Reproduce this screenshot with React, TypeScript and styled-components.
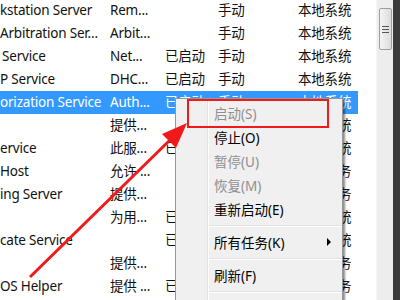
import { FC } from 'react'
import styled, { createGlobalStyle, css } from 'styled-components'

const GlobalStyle = createGlobalStyle`
  html, body {
    margin: 0;
    padding: 0;
    background: #ffffff;
    overflow: hidden;
  }
  body {
    font-family: 'Noto Sans', 'Noto Sans CJK SC', sans-serif;
  }
`

const Screen = styled.div`
  position: relative;
  width: 400px;
  height: 300px;
  display: flex;
  flex-direction: row;
  overflow: hidden;
  font-size: 13.5px;
  color: #111111;
`

const ListPane = styled.div`
  flex: 0 0 376px;
  background: #ffffff;
  overflow: hidden;
  display: flex;
  flex-direction: column;
  margin-top: -1px;
`

const Row = styled.div<{ selected?: boolean }>`
  ${({ selected }) => css`
    flex: 0 0 23px;
    width: 358px;
    display: grid;
    grid-template-columns: 110px 55px 53px 80px 60px;
    align-items: center;
    white-space: nowrap;
    background: ${selected ? '#3399ff' : 'transparent'};
    color: ${selected ? '#ffffff' : '#111111'};
  `}
`

const Cell = styled.div<{ indent?: number }>`
  ${({ indent }) => css`
    overflow: hidden;
    padding-left: ${indent ?? 0}px;
    line-height: 23px;
    letter-spacing: -0.2px;
  `}
`

const ScrollTrack = styled.div`
  flex: 0 0 17px;
  background: #ededed;
  border-left: 1px solid #f6f6f6;
  padding: 8px 1px 0 2px;
  box-sizing: border-box;
`

const Thumb = styled.div`
  height: 42px;
  border: 1px solid #9e9e9e;
  border-radius: 2px;
  background: linear-gradient(to right, #f4f4f4, #dcdcdc);
  display: flex;
  flex-direction: column;
  align-items: center;
  justify-content: center;
  gap: 2px;
  box-sizing: border-box;
`

const Grip = styled.div`
  width: 7px;
  height: 1px;
  background: #555;
`

const DarkEdge = styled.div`
  flex: 1;
  background: #3b3b3b;
`

const Menu = styled.div`
  position: absolute;
  left: 175px;
  top: 98px;
  width: 168px;
  height: 230px;
  box-sizing: border-box;
  border: 1px solid #979797;
  padding-top: 2px;
  background: linear-gradient(
    to right,
    #f0f0f0 31px,
    #e2e3e3 31px,
    #e2e3e3 32px,
    #ffffff 32px,
    #ffffff 33px,
    #f0f0f0 33px
  );
  box-shadow: 2px 2px 2px rgba(0, 0, 0, 0.45);
  display: flex;
  flex-direction: column;
`

const MenuItem = styled.div<{ disabled?: boolean }>`
  ${({ disabled }) => css`
    height: 24px;
    display: flex;
    align-items: center;
    justify-content: space-between;
    padding: 0 11px 0 38px;
    color: ${disabled ? '#8f8f8f' : '#000000'};
    white-space: nowrap;
  `}
`

const SubArrow = styled.span`
  width: 0;
  height: 0;
  border-left: 4px solid #000;
  border-top: 4px solid transparent;
  border-bottom: 4px solid transparent;
`

const Separator = styled.div`
  height: 9px;
  display: flex;
  align-items: center;
  padding-left: 33px;
  &::after {
    content: '';
    flex: 1;
    height: 1px;
    background: #e0e0e0;
    border-bottom: 1px solid #ffffff;
  }
`

const RedBox = styled.div`
  position: absolute;
  left: 187px;
  top: 99px;
  width: 142px;
  height: 29px;
  box-sizing: border-box;
  border: 2px solid #f01a1a;
`

const Overlay = styled.svg`
  position: absolute;
  left: 0;
  top: 0;
  pointer-events: none;
`

type Service = {
  name: string
  indent?: number
  desc: string
  status: string
  start: string
  logon: string
}

const services: Service[] = [
  { name: 'kstation Server', desc: 'Rem...', status: '', start: '手动', logon: '本地系统' },
  { name: 'Arbitration Ser...', desc: 'Arbit...', status: '', start: '手动', logon: '本地系统' },
  { name: 'Service', indent: 2, desc: 'Net...', status: '已启动', start: '手动', logon: '本地系统' },
  { name: 'P Service', desc: 'DHC...', status: '已启动', start: '手动', logon: '本地系统' },
  { name: 'orization Service', desc: 'Auth...', status: '已启动', start: '手动', logon: '本地系统' },
  { name: '', desc: '提供...', status: '', start: '手动', logon: '本地系统' },
  { name: 'ervice', desc: '此服...', status: '已启动', start: '手动', logon: '本地系统' },
  { name: 'Host', desc: '允许 ...', status: '', start: '手动', logon: '网络服务' },
  { name: 'ing Server', desc: '提供...', status: '', start: '手动', logon: '本地服务' },
  { name: '', desc: '为用...', status: '已启动', start: '自动', logon: '本地系统' },
  { name: 'cate Service', desc: '', status: '已启动', start: '手动', logon: '本地系统' },
  { name: '', desc: '提供...', status: '', start: '手动', logon: '本地服务' },
  { name: 'OS Helper', desc: '提供 ...', status: '已启动', start: '自动', logon: '网络服务' },
]

const App: FC = () => {
  return (
    <>
      <GlobalStyle />
      <Screen>
        <ListPane>
          {services.map((s, i) => (
            <Row key={i} selected={i === 4}>
              <Cell indent={s.indent}>{s.name}</Cell>
              <Cell>{s.desc}</Cell>
              <Cell>{s.status}</Cell>
              <Cell>{s.start}</Cell>
              <Cell>{s.logon}</Cell>
            </Row>
          ))}
        </ListPane>
        <ScrollTrack>
          <Thumb>
            <Grip />
            <Grip />
            <Grip />
          </Thumb>
        </ScrollTrack>
        <DarkEdge />

        <Menu>
          <MenuItem disabled>启动(S)</MenuItem>
          <MenuItem>停止(O)</MenuItem>
          <MenuItem disabled>暂停(U)</MenuItem>
          <MenuItem disabled>恢复(M)</MenuItem>
          <MenuItem>重新启动(E)</MenuItem>
          <Separator />
          <MenuItem>
            所有任务(K)
            <SubArrow />
          </MenuItem>
          <Separator />
          <MenuItem>刷新(F)</MenuItem>
          <Separator />
        </Menu>

        <RedBox />

        {/* annotation arrow pointing at the start item */}
        <Overlay width="400" height="300" viewBox="0 0 400 300">
          <line x1="30" y1="277" x2="170" y2="140" stroke="#f01a1a" strokeWidth="3" />
          <polygon points="187,123 162,134 176,148" fill="#f01a1a" />
        </Overlay>
      </Screen>
    </>
  )
}

export default App
